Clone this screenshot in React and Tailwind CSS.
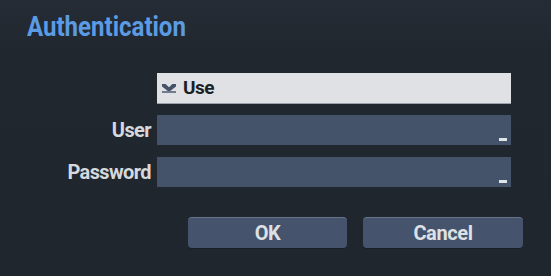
import React from "react";

function CheckIcon() {
  return (
    <svg width="14" height="9" viewBox="0 0 14 9" className="shrink-0">
      <path d="M0 0 L3.6 0 L7 3.2 L10.4 0 L14 0 L14 2.6 L8.2 7 L5.8 7 L0 2.6 Z" fill="#46516a" />
      <rect x="0" y="7" width="14" height="2" fill="#717b8f" />
    </svg>
  );
}

function Field() {
  return (
    <div className="relative w-[354px] h-[30px] bg-[#44536a]">
      <div className="absolute right-[4px] bottom-[4px] w-[8px] h-[3px] bg-[#dfe3ea]" />
    </div>
  );
}

export default function App() {
  return (
    <div
      className="w-[551px] h-[276px] bg-linear-to-b from-[#262c35] via-[#21272f] via-[18%] to-[#20262e] relative overflow-hidden"
      style={{ fontFamily: "Roboto, 'Liberation Sans', sans-serif" }}
    >
      <div className="pl-[27px] pt-[11px]">
        <div className="origin-left scale-x-[0.89] text-[27px] leading-[32px] font-bold text-[#5b9be4] whitespace-nowrap">
          Authentication
        </div>
      </div>
      <div className="mt-[30px] flex flex-col gap-[11px]">
        <div className="flex items-center">
          <div className="w-[157px]" />
          <div className="w-[354px] h-[31px] bg-[#dfe1e4] border-b border-[#9aa1ab] flex items-center pl-[5px] gap-[7px]">
            <CheckIcon />
            <span className="text-[19px] font-bold text-[#1b1f26] tracking-[-0.5px]">Use</span>
          </div>
        </div>
        <div className="flex items-center">
          <div className="w-[151px] text-right text-[20px] font-bold text-[#d5d8dc] tracking-[-0.6px]">User</div>
          <div className="w-[6px]" />
          <Field />
        </div>
        <div className="flex items-center mt-[1px]">
          <div className="w-[151px] text-right text-[20px] font-bold text-[#d5d8dc] tracking-[-0.6px]">Password</div>
          <div className="w-[6px]" />
          <Field />
        </div>
      </div>
      <div className="mt-[30px] flex pl-[188px] gap-[16px]">
        <button className="w-[159px] h-[31px] rounded-[4px] bg-[#45546c] border-t border-[#66738a] text-[20px] font-bold text-[#dde0e4] shadow-[0_1px_0_#1a1f27] tracking-[-0.4px]">
          OK
        </button>
        <button className="w-[160px] h-[31px] rounded-[4px] bg-[#45546c] border-t border-[#66738a] text-[20px] font-bold text-[#dde0e4] shadow-[0_1px_0_#1a1f27] tracking-[-0.4px]">
          Cancel
        </button>
      </div>
    </div>
  );
}
